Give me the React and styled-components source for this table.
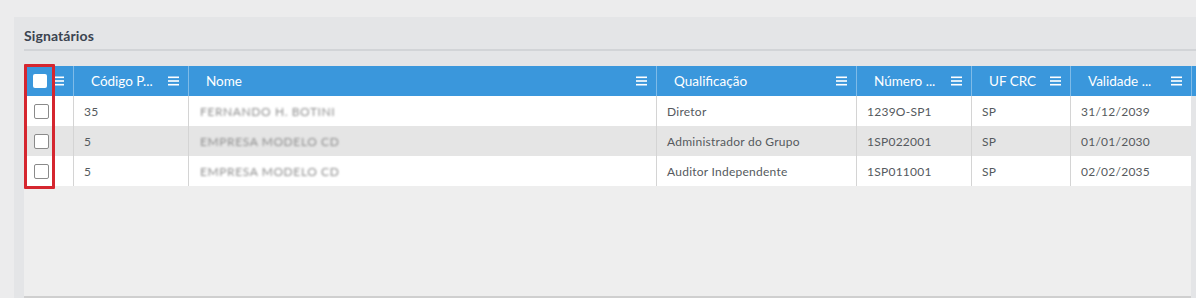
import React from "react";
import styled, { createGlobalStyle } from "styled-components";

const Global = createGlobalStyle`
  html, body { margin: 0; padding: 0; }
  body {
    background: #ececed;
    font-family: Lato, "Open Sans", "Liberation Sans", sans-serif;
    overflow: hidden;
  }
`;

const Page = styled.div`
  width: 1196px;
  height: 298px;
  padding: 17px 0 0 14px;
  box-sizing: border-box;
`;

const Panel = styled.section`
  background: #e4e5e7;
  height: 281px;
  padding: 0 0 0 10px;
  box-sizing: border-box;
  display: flex;
  flex-direction: column;
  position: relative;
`;

const TitleBar = styled.div`
  display: flex;
  align-items: center;
  border-bottom: 2px solid #d2d4d7;
  padding-top: 4px;
  box-sizing: border-box;
  height: 34px;
`;

const Title = styled.h2`
  margin: 0;
  font-size: 14px;
  font-weight: 700;
  color: #3b4450;
  letter-spacing: 0.1px;
`;

const Grid = styled.div`
  margin-top: 15px;
  display: flex;
  flex-direction: column;
  flex: 1;
  position: relative;
`;

const HeaderRow = styled.div`
  display: flex;
  height: 30px;
  background: #3a97dc;
`;

const HeadCell = styled.div`
  width: ${(p) => p.w}px;
  flex: ${(p) => (p.fill ? 1 : "none")};
  box-sizing: border-box;
  display: flex;
  align-items: center;
  justify-content: space-between;
  padding: ${(p) => (p.check ? "0 9px 0 9px" : "0 9px 0 17px")};
  border-right: ${(p) => (p.fill ? "none" : "1px solid #7fbbe8")};
  color: #fff;
  font-size: 13.5px;
  white-space: nowrap;
`;

const Body = styled.div`
  flex: 1;
  width: 1167px;
  background: #eeeeee;
  border-bottom: 2px solid #cfcfcf;
`;

const Row = styled.div`
  display: flex;
  height: 30px;
  background: ${(p) => (p.alt ? "#e5e5e5" : "#ffffff")};
`;

const Cell = styled.div`
  width: ${(p) => p.w}px;
  flex: none;
  box-sizing: border-box;
  display: flex;
  align-items: center;
  padding-left: 10px;
  border-right: ${(p) => (p.last ? "none" : "1px solid #d4d4d4")};
  font-size: 12px;
  letter-spacing: 0.25px;
  color: #555a5e;
  white-space: nowrap;
  overflow: hidden;
`;

const Blurred = styled.span`
  filter: blur(1px);
  color: #8f8f8f;
  font-size: 12px;
  letter-spacing: 0.6px;
  padding-left: 1px;
`;

const Box = styled.span`
  display: inline-block;
  width: ${(p) => (p.head ? 14 : 15)}px;
  height: ${(p) => (p.head ? 14 : 15)}px;
  box-sizing: border-box;
  border-radius: 2px;
  background: #fff;
  border: ${(p) => (p.head ? "none" : "1px solid #8a8a8a")};
`;

const Highlight = styled.div`
  position: absolute;
  left: 0;
  top: -2px;
  width: 31px;
  height: 125px;
  box-sizing: border-box;
  border: 3px solid #d5262f;
  border-radius: 1px;
  pointer-events: none;
`;

const Menu = () => (
  <svg width="11" height="10" viewBox="0 0 11 10">
    <rect x="0" y="0.5" width="11" height="1.6" fill="#fff" />
    <rect x="0" y="4.2" width="11" height="1.6" fill="#fff" />
    <rect x="0" y="7.9" width="11" height="1.6" fill="#fff" />
  </svg>
);

const cols = [
  { w: 50 },
  { w: 115, label: "Código P..." },
  { w: 468, label: "Nome" },
  { w: 200, label: "Qualificação" },
  { w: 115, label: "Número ..." },
  { w: 99, label: "UF CRC" },
  { w: 121, label: "Validade ..." },
];

const rows = [
  ["35", "FERNANDO H. BOTINI", "Diretor", "1239O-SP1", "SP", "31/12/2039"],
  ["5", "EMPRESA MODELO CD", "Administrador do Grupo", "1SP022001", "SP", "01/01/2030"],
  ["5", "EMPRESA MODELO CD", "Auditor Independente", "1SP011001", "SP", "02/02/2035"],
];

export default function App() {
  return (
    <>
      <Global />
      <Page>
        <Panel>
          <TitleBar>
            <Title>Signatários</Title>
          </TitleBar>
          <Grid>
            <HeaderRow>
              <HeadCell w={50} check>
                <Box head />
                <Menu />
              </HeadCell>
              {cols.slice(1).map((c) => (
                <HeadCell key={c.label} w={c.w}>
                  <span>{c.label}</span>
                  <Menu />
                </HeadCell>
              ))}
              <HeadCell fill />
            </HeaderRow>
            <Body>
              {rows.map((r, i) => (
                <Row key={i} alt={i === 1}>
                  <Cell w={50}>
                    <Box />
                  </Cell>
                  {r.map((v, j) => (
                    <Cell key={j} w={cols[j + 1].w} last={j === r.length - 1}>
                      {j === 1 ? <Blurred>{v}</Blurred> : v}
                    </Cell>
                  ))}
                </Row>
              ))}
            </Body>
            <Highlight />
          </Grid>
        </Panel>
      </Page>
    </>
  );
}
